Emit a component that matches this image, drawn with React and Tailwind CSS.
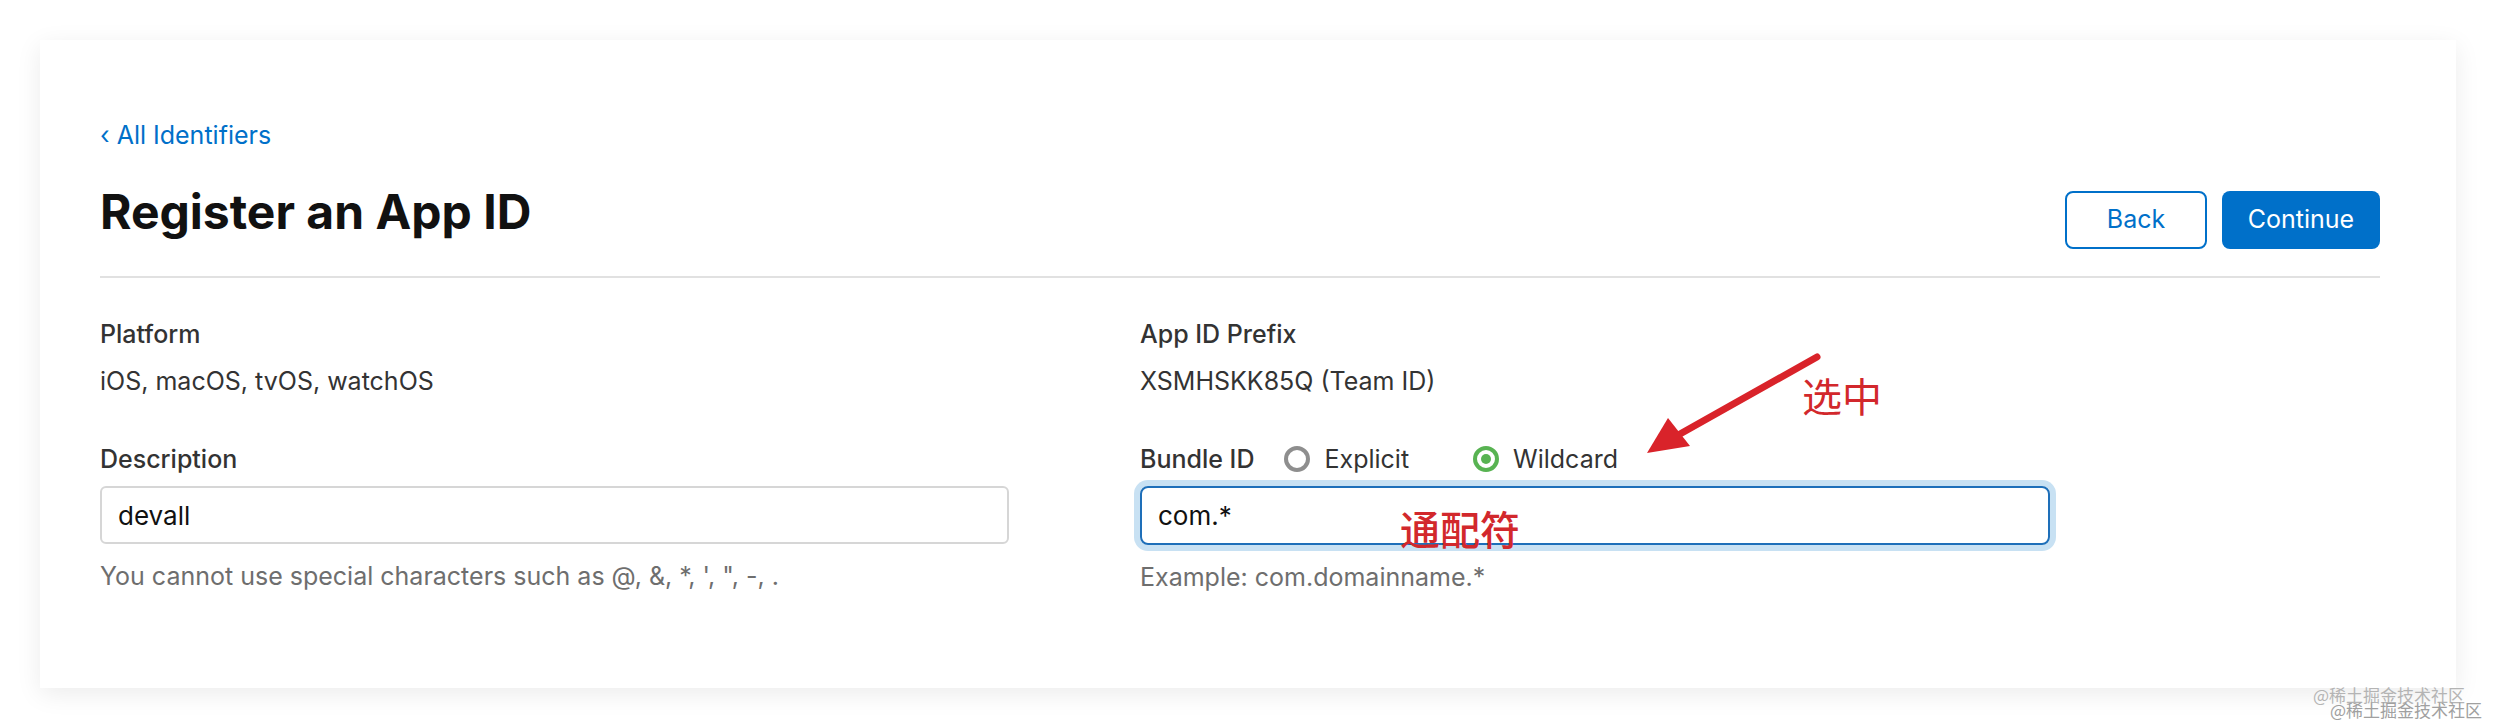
import React from "react";

const font = { fontFamily: "Inter, 'Noto Sans CJK SC', sans-serif" };
const cjk = { fontFamily: "'Noto Sans CJK SC', sans-serif" };

const Radio = ({ checked, label }) => (
  <div className="flex items-center">
    {checked ? (
      <span className="flex w-[26px] h-[26px] rounded-full border-[4.5px] border-[#58b352] items-center justify-center">
        <span className="w-[10px] h-[10px] rounded-full bg-[#58b352]" />
      </span>
    ) : (
      <span className="w-[26px] h-[26px] rounded-full border-[4px] border-[#8e8e8e]" />
    )}
    <span className="ml-[14px] text-[25px] leading-[30px] text-[#333]">{label}</span>
  </div>
);

export default function App() {
  return (
    <div
      className="relative w-[2496px] h-[728px] bg-white pt-[40px] px-[40px] overflow-hidden"
      style={font}
    >
      <div className="relative h-[648px] bg-white pl-[60px] pr-[76px] shadow-[0_6px_24px_rgba(0,0,0,0.08)]">
        {/* header */}
        <div className="pt-[80px]">
          <a className="text-[25px] leading-[30px] text-[#0070c9]">‹ All Identifiers</a>
        </div>
        <div className="mt-[41px] flex items-start justify-between">
          <h1 className="text-[48px] leading-[42px] font-bold text-[#111]">
            Register an App ID
          </h1>
          <div className="flex gap-[15px]">
            <button className="w-[142px] h-[58px] rounded-[8px] border-2 border-[#0070c9] text-[25px] text-[#0070c9]">
              Back
            </button>
            <button className="w-[158px] h-[58px] rounded-[8px] bg-[#0070c9] text-[25px] text-white">
              Continue
            </button>
          </div>
        </div>
        <div className="mt-[27px] h-[2px] bg-[#e1e1e1]" />

        {/* form */}
        <div className="mt-[41px] grid grid-cols-[1040px_1fr]">
          <div>
            <div className="text-[25px] leading-[30px] font-medium text-[#333]">Platform</div>
            <div className="mt-[17px] text-[25px] leading-[30px] text-[#333]">
              iOS, macOS, tvOS, watchOS
            </div>
            <div className="mt-[48px] text-[25px] leading-[30px] font-medium text-[#333]">
              Description
            </div>
            <input
              readOnly
              value="devall"
              className="mt-[12px] block w-[909px] h-[58px] rounded-[6px] border-2 border-[#d6d6d6] px-[16px] text-[26px] text-[#111] outline-none"
            />
            <div className="mt-[17px] text-[25px] leading-[30px] text-[#6e6e6e]">
              You cannot use special characters such as @, &amp;, *, ', ", -, .
            </div>
          </div>
          <div>
            <div className="text-[25px] leading-[30px] font-medium text-[#333]">App ID Prefix</div>
            <div className="mt-[17px] text-[25px] leading-[30px] text-[#333]">
              XSMHSKK85Q (Team ID)
            </div>
            <div className="mt-[48px] flex items-center h-[30px]">
              <span className="text-[25px] leading-[30px] font-medium text-[#333]">Bundle ID</span>
              <div className="ml-[30px]">
                <Radio label="Explicit" />
              </div>
              <div className="ml-[64px]">
                <Radio checked label="Wildcard" />
              </div>
            </div>
            <input
              readOnly
              value="com.*"
              className="mt-[12px] block w-[910px] h-[59px] rounded-[8px] border-[2.5px] border-[#1e6fb9] ring-[6px] ring-[#c8e1f3] px-[16px] text-[26px] text-[#111] outline-none"
            />
            <div className="mt-[17px] text-[25px] leading-[30px] text-[#6e6e6e]">
              Example: com.domainname.*
            </div>
          </div>
        </div>

        {/* annotations */}
        <svg
          className="absolute left-[1600px] top-[310px]"
          width="190"
          height="110"
          viewBox="0 0 190 110"
        >
          <line x1="177" y1="7" x2="40" y2="84" stroke="#d9232a" strokeWidth="7" strokeLinecap="round" />
          <polygon points="7,103 28,68 50,96" fill="#d9232a" />
        </svg>
        <div
          className="absolute left-[1762px] top-[335px] text-[40px] leading-none text-[#d2282c]"
          style={cjk}
        >
          选中
        </div>
        <div
          className="absolute left-[1360px] top-[468px] text-[40px] leading-none text-[#d2282c] font-medium"
          style={cjk}
        >
          通配符
        </div>
      </div>

      {/* watermark */}
      <div
        className="absolute left-[2313px] top-[686px] text-[17px] leading-none text-[#b4b4b4]"
        style={cjk}
      >
        @稀土掘金技术社区
      </div>
      <div
        className="absolute left-[2330px] top-[701px] text-[17px] leading-none text-[#a0a0a0]"
        style={cjk}
      >
        @稀土掘金技术社区
      </div>
    </div>
  );
}
